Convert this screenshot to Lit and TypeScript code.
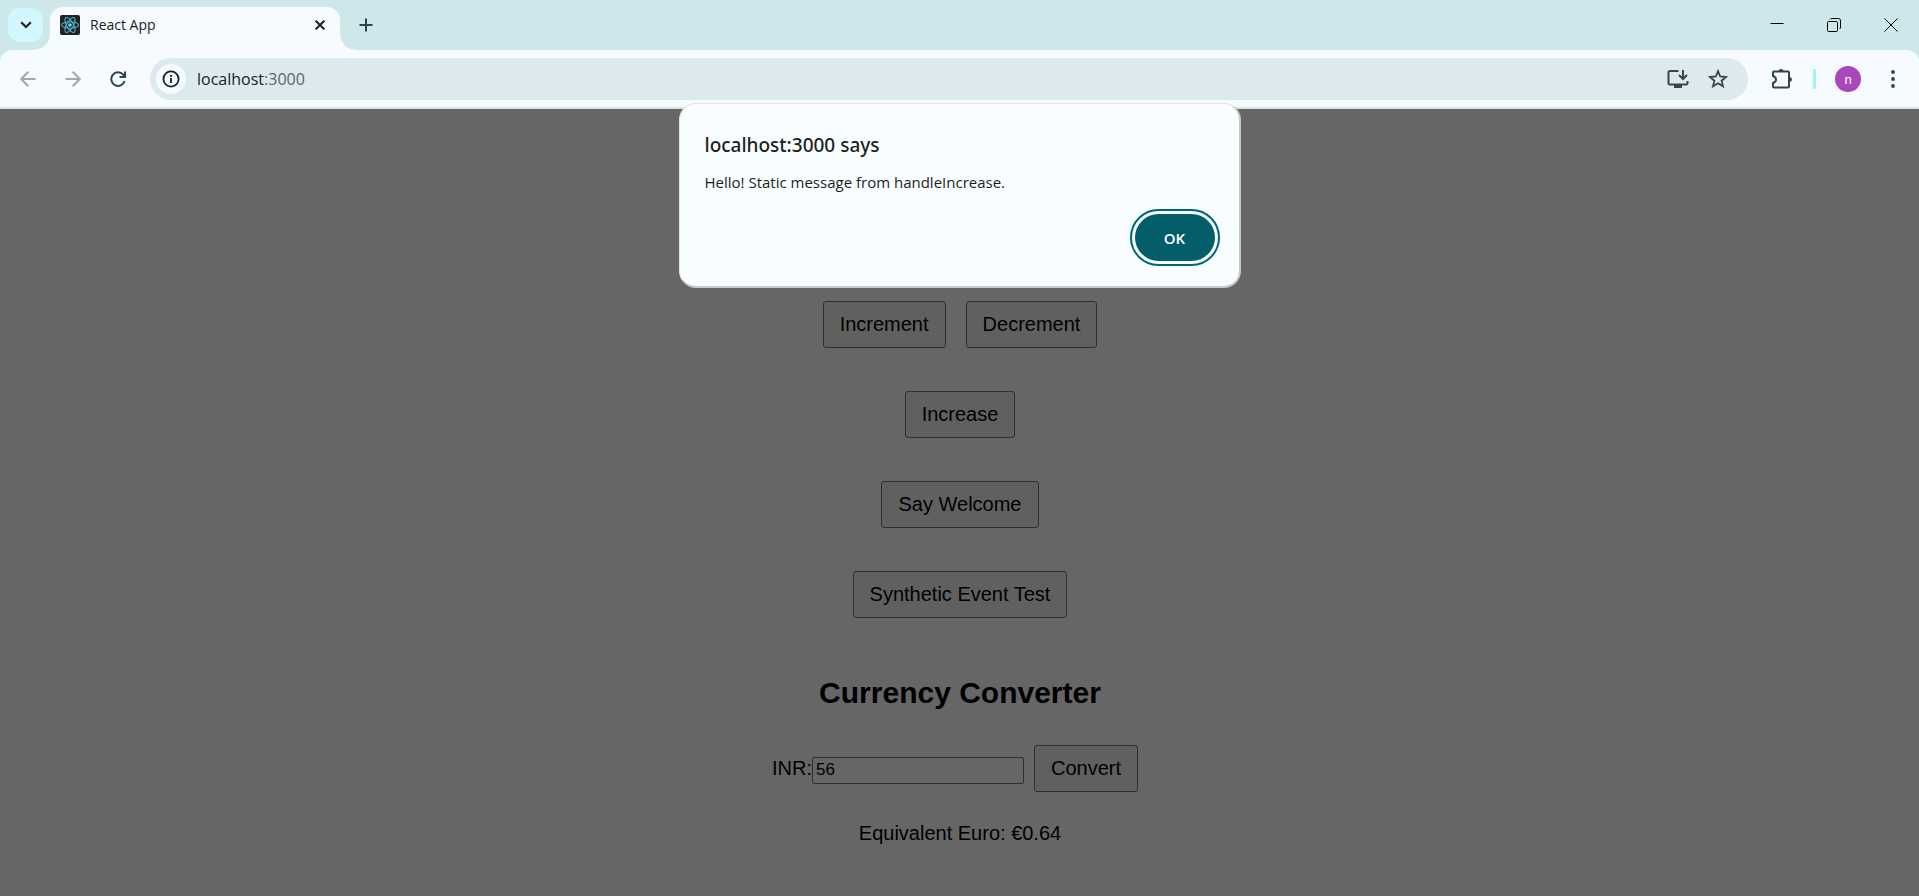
import { LitElement, html, css, svg } from "lit";
import { customElement, property, state } from "lit/decorators.js";

const RATE = 0.01143;

@customElement("browser-tabs")
class BrowserTabs extends LitElement {
  static styles = css`
    :host {
      display: flex;
      align-items: flex-end;
      height: 50px;
      background: #cee7eb;
      font-family: "Open Sans", "Noto Sans", sans-serif;
      color: #1b2224;
    }
    button {
      border: 0;
      padding: 0;
      background: none;
      color: inherit;
      display: grid;
      place-items: center;
    }
    .search {
      width: 35px;
      height: 34px;
      margin: 0 7px 8px 8px;
      border-radius: 12px;
      background: #d2f7ff;
    }
    .tab {
      position: relative;
      display: flex;
      align-items: center;
      box-sizing: border-box;
      width: 290px;
      height: 43px;
      padding: 0 8px 7px 10px;
      border-radius: 13px 13px 0 0;
      background: #f5fbfe;
    }
    .tab::before,
    .tab::after {
      content: "";
      position: absolute;
      bottom: 0;
      width: 15px;
      height: 15px;
    }
    .tab::before {
      right: 100%;
      background: radial-gradient(circle at 0 0, transparent 14px, #f5fbfe 15px);
    }
    .tab::after {
      left: 100%;
      background: radial-gradient(circle at 100% 0, transparent 14px, #f5fbfe 15px);
    }
    .name {
      flex: 1;
      margin-left: 10px;
      font-size: 14px;
      line-height: 22px;
    }
    .close {
      width: 24px;
      height: 24px;
    }
    .plus {
      width: 32px;
      height: 34px;
      margin: 0 0 8px 10px;
      color: #2d464c;
    }
    .window {
      display: flex;
      align-self: flex-start;
      margin-left: auto;
      color: #000;
    }
    .window button {
      width: 57px;
      height: 49px;
    }
    svg {
      display: block;
    }
  `;

  render() {
    return html`
      <button class="search" aria-label="Search tabs">
        <svg width="12" height="8" viewBox="0 0 12 8" fill="none" stroke="currentColor" stroke-width="2.2">
          <path d="M1.2 1.2 6 6l4.800-4.800" />
        </svg>
      </button>
      <div class="tab">
        <svg width="20" height="20" viewBox="0 0 20 20">
          <rect width="20" height="20" rx="2" fill="#222" />
          <g fill="none" stroke="#4fb4cc" stroke-width="1.100">
            ${[0, 60, 120].map((a) => svg`<ellipse cx="10" cy="10" rx="8.500" ry="3.300" transform="rotate(${a} 10 10)" />`)}
          </g>
          <circle cx="10" cy="10" r="1.800" fill="#61dafb" />
        </svg>
        <span class="name">React App</span>
        <button class="close" aria-label="Close tab">
          <svg width="10" height="10" viewBox="0 0 10 10" stroke="currentColor" stroke-width="2">
            <path d="M.6.6l8.800 8.800M9.400.6.6 9.400" />
          </svg>
        </button>
      </div>
      <button class="plus" aria-label="New tab">
        <svg width="14" height="14" viewBox="0 0 14 14" stroke="currentColor" stroke-width="2">
          <path d="M7 .5v13M.5 7h13" />
        </svg>
      </button>
      <div class="window">
        <button aria-label="Minimize">
          <svg width="14" height="14" viewBox="0 0 14 14" stroke="currentColor"><path d="M.5 5.500h13" /></svg>
        </button>
        <button aria-label="Restore">
          <svg width="14" height="14" viewBox="0 0 14 14" fill="none" stroke="currentColor">
            <rect x=".5" y="3.500" width="10" height="10" rx="1" />
            <path d="M3 1.500Q3.500.5 5 .5h6.500q2 0 2 2V9q0 1.500-1 2" />
          </svg>
        </button>
        <button aria-label="Close">
          <svg width="14" height="14" viewBox="0 0 14 14" stroke="currentColor"><path d="m.5.5 13 13M13.500.5l-13 13" /></svg>
        </button>
      </div>
    `;
  }
}

@customElement("browser-toolbar")
class BrowserToolbar extends LitElement {
  @property() host = "";
  @property() port = "";

  static styles = css`
    :host {
      display: block;
      background: #cee7eb;
      font-family: "Open Sans", "Noto Sans", sans-serif;
    }
    .bar {
      display: flex;
      align-items: center;
      box-sizing: border-box;
      height: 59px;
      padding: 1px 10px 0 12px;
      border-bottom: 2px solid #d9e6e9;
      border-radius: 12px 12px 0 0;
      background: #f5fbfe;
      color: #2d464c;
    }
    button {
      border: 0;
      padding: 0;
      width: 32px;
      height: 32px;
      background: none;
      color: inherit;
      display: grid;
      place-items: center;
    }
    .nav {
      display: flex;
      gap: 13px;
      margin-right: 16px;
    }
    .nav button:disabled {
      color: #a3a9ab;
    }
    .address {
      flex: 1;
      display: flex;
      align-items: center;
      box-sizing: border-box;
      height: 42px;
      padding: 0 14px 0 6px;
      border-radius: 21px;
      background: #dceaee;
      color: #3c4447;
    }
    .address .info {
      width: 30px;
      height: 30px;
      border-radius: 50%;
      background: #f5fbfe;
      color: #1b2224;
    }
    .url {
      flex: 1;
      margin-left: 11px;
      font-size: 16px;
      line-height: 24px;
      color: #5a6468;
    }
    .url b {
      font-weight: 400;
      color: #1b2224;
    }
    .address .star {
      margin-left: 8px;
    }
    .extensions {
      margin-left: 18px;
    }
    .rule {
      width: 3px;
      height: 20px;
      margin: 0 19px 0 15px;
      border-radius: 1px;
      background: #a3effe;
    }
    .bar .profile {
      width: 26px;
      height: 26px;
      margin-right: 16px;
      border-radius: 50%;
      background: #ab47bc;
      color: #fff;
      font: 13px "Liberation Sans", sans-serif;
    }
    svg {
      display: block;
    }
  `;

  render() {
    return html`
      <div class="bar">
        <div class="nav">
          <button disabled aria-label="Back">
            <svg width="16" height="16" viewBox="0 0 16 16" fill="none" stroke="currentColor" stroke-width="2">
              <path d="M8.300.8 1.200 8l7.100 7.200M1.200 8H15.500" />
            </svg>
          </button>
          <button disabled aria-label="Forward">
            <svg width="16" height="16" viewBox="0 0 16 16" fill="none" stroke="currentColor" stroke-width="2">
              <path d="M7.700.8 14.800 8l-7.100 7.200M14.800 8H.5" />
            </svg>
          </button>
          <button aria-label="Reload">
            <svg width="16" height="16" viewBox="0 0 16 16" fill="none" stroke="currentColor" stroke-width="2">
              <path d="M14.600 10A6.800 6.800 0 1 1 13.200 3.600L15 5.600M15 .5V6H9.500" />
            </svg>
          </button>
        </div>
        <div class="address">
          <button class="info" aria-label="View site information">
            <svg width="18" height="18" viewBox="0 0 18 18" fill="none" stroke="currentColor" stroke-width="1.800">
              <circle cx="9" cy="9" r="7.600" />
              <path d="M9 8v5M9 5v1.900" />
            </svg>
          </button>
          <span class="url"><b>${this.host}</b>:${this.port}</span>
          <button aria-label="Install">
            <svg width="22" height="20" viewBox="0 0 22 20" fill="none" stroke="currentColor" stroke-width="2">
              <path d="M11.500 2H3Q1.500 2 1.500 3.500V14Q1.500 15.500 3 15.500H19Q20.500 15.500 20.500 14V12M16 1V9M12 6l4 4 4-4" />
              <path d="M7 16h8v3H7z" fill="currentColor" stroke="none" />
            </svg>
          </button>
          <button class="star" aria-label="Bookmark this tab">
            <svg width="20" height="20" viewBox="0 0 20 20" fill="none" stroke="currentColor" stroke-width="1.800">
              <path d="m10 2.200 2.200 5.300 5.800.5-4.400 3.700 1.400 5.600L10 14.300l-5 3 1.400-5.600L2 8l5.800-.5z" />
            </svg>
          </button>
        </div>
        <button class="extensions" aria-label="Extensions">
          <svg width="22" height="22" viewBox="0 0 22 22">
            <path d="M3 3.500H17Q18 3.500 18 4.500V18.500Q18 19.500 17 19.500H3Q2 19.500 2 18.500V15Q5 14 5 11.500T2 8V4.500Q2 3.500 3 3.500Z" fill="none" stroke="currentColor" stroke-width="2" />
            <path d="M7.500 3.500a2.500 2.500 0 0 1 5 0zM18.500 9a2.500 2.500 0 0 1 0 5z" fill="currentColor" />
          </svg>
        </button>
        <span class="rule"></span>
        <button class="profile" aria-label="Profile">n</button>
        <button aria-label="Menu">
          <svg width="4" height="18" viewBox="0 0 4 18" fill="currentColor">
            <circle cx="2" cy="2" r="1.900" />
            <circle cx="2" cy="9" r="1.900" />
            <circle cx="2" cy="16" r="1.900" />
          </svg>
        </button>
      </div>
    `;
  }
}

@customElement("alert-dialog")
class AlertDialog extends LitElement {
  @property() heading = "";
  @property() message = "";

  static styles = css`
    :host {
      display: flex;
      flex-direction: column;
      box-sizing: border-box;
      width: 562px;
      padding: 27px 20px 20px 25px;
      border: 1px solid #e8e2d9;
      border-right: 2px solid #c9c9c2;
      border-bottom: 2px solid #c9c9c2;
      border-radius: 17px;
      background: #f8feff;
      color: #1b1f20;
      font-family: "Open Sans", "Noto Sans", sans-serif;
    }
    h2 {
      margin: 0;
      font-family: "Noto Sans", sans-serif;
      font-size: 19px;
      font-weight: 500;
      line-height: 28px;
    }
    p {
      margin: 12px 0 0;
      font-size: 15px;
      line-height: 22px;
    }
    button {
      align-self: flex-end;
      width: 80px;
      height: 47px;
      margin-top: 21px;
      margin-right: 4px;
      margin-bottom: 5px;
      padding: 0;
      border: 0;
      border-radius: 24px;
      outline: 2px solid #006874;
      outline-offset: 3px;
      background: #045e6a;
      color: #fff;
      font: 600 15px "Open Sans", "Noto Sans", sans-serif;
    }
  `;

  render() {
    return html`
      <h2>${this.heading}</h2>
      <p>${this.message}</p>
      <button @click=${() => this.dispatchEvent(new Event("dismiss"))}>OK</button>
    `;
  }
}

@customElement("app-root")
class AppRoot extends LitElement {
  @state() private open = true;
  @state() private rupees = "56";
  @state() private euros = "0.64";

  static styles = css`
    :host {
      display: flex;
      flex-direction: column;
      min-height: 100vh;
    }
    .stage {
      position: relative;
      flex: 1;
      background: #666;
      color: #000;
      font: 20px/23px "Liberation Sans", Arial, sans-serif;
    }
    main {
      display: flex;
      flex-direction: column;
      align-items: center;
      padding: 192px 16px 32px 17px;
    }
    .row {
      display: flex;
      justify-content: center;
      gap: 20px;
      margin-bottom: 43px;
    }
    .act {
      padding: 11px 16px;
      border: 1px solid #2f2f2f;
      border-radius: 3px;
      background: #606060;
      color: #000;
      font: inherit;
    }
    h2 {
      margin: 15px 0 35px;
      font-size: 30px;
      line-height: 34px;
    }
    form {
      display: flex;
      align-items: baseline;
      margin-right: 10px;
    }
    input {
      box-sizing: border-box;
      width: 212px;
      height: 27px;
      margin-right: 10px;
      padding: 1px 3px;
      border: 1px solid #2f2f2f;
      border-radius: 2px;
      background: #666;
      color: #000;
      font: 17px "Liberation Sans", Arial, sans-serif;
    }
    .result {
      margin: 30px 0 0;
    }
    .dialog {
      position: absolute;
      top: -6px;
      left: 50%;
      transform: translateX(-50%);
    }
  `;

  private show = () => {
    this.open = true;
  };

  private convert = (e: Event) => {
    e.preventDefault();
    this.euros = (Number(this.rupees) * RATE).toFixed(2);
  };

  render() {
    return html`
      <browser-tabs></browser-tabs>
      <browser-toolbar host="localhost" port="3000"></browser-toolbar>
      <div class="stage">
        <main>
          <div class="row">
            <button class="act" @click=${this.show}>Increment</button>
            <button class="act">Decrement</button>
          </div>
          <div class="row"><button class="act" @click=${this.show}>Increase</button></div>
          <div class="row"><button class="act">Say Welcome</button></div>
          <div class="row"><button class="act">Synthetic Event Test</button></div>
          <h2>Currency Converter</h2>
          <form @submit=${this.convert}>
            <label for="inr">INR:</label>
            <input
              id="inr"
              type="text"
              .value=${this.rupees}
              @input=${(e: InputEvent) => (this.rupees = (e.target as HTMLInputElement).value)}
            />
            <button class="act">Convert</button>
          </form>
          <p class="result">Equivalent Euro: €${this.euros}</p>
        </main>
        ${this.open
          ? html`<alert-dialog
              class="dialog"
              role="alertdialog"
              heading="localhost:3000 says"
              message="Hello! Static message from handleIncrease."
              @dismiss=${() => (this.open = false)}
            ></alert-dialog>`
          : null}
      </div>
    `;
  }
}
